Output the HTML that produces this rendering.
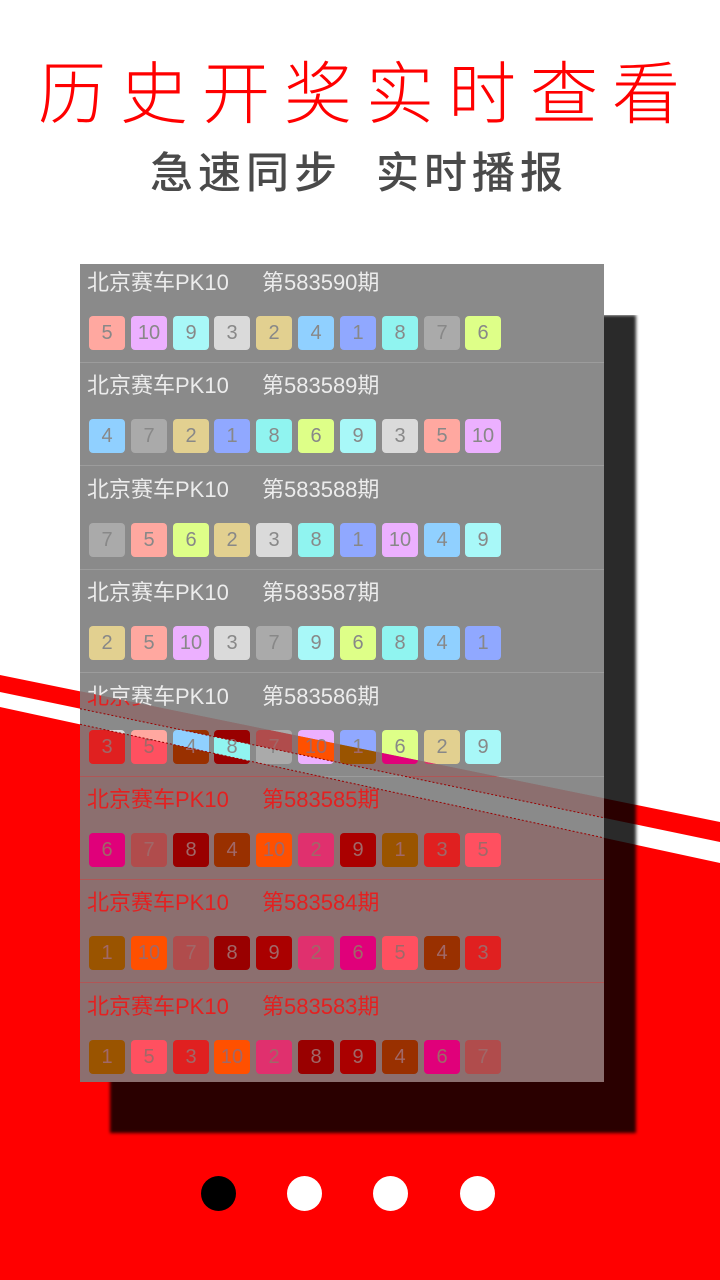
<!DOCTYPE html>
<html><head><meta charset="utf-8"><style>
*{margin:0;padding:0;box-sizing:border-box}
body{width:720px;height:1280px;position:relative;overflow:hidden;background:#fff;font-family:"Liberation Sans","Noto Sans CJK SC",sans-serif}
.abs{position:absolute}
.h1{left:38px;top:55px;font-size:68px;line-height:80px;color:#f00;letter-spacing:14px;white-space:nowrap;font-weight:300}
.h2{top:146px;font-size:43px;line-height:56px;color:#4a4a4a;letter-spacing:5px;white-space:nowrap;font-weight:500}
.shadow{left:110px;top:315px;width:526px;height:818px;background:rgba(0,0,0,.835);filter:blur(1.5px);clip-path:polygon(494px 0,530px 0,530px 830px,-10px 830px,-10px 767px,494px 767px)}
.panel{left:80px;top:264px;width:524px;height:818px;overflow:hidden}
.layer{position:absolute;left:0;top:0;width:524px;height:818px}
.norm{background:rgba(125,125,125,.9)}
.red{background:#8c6f6f;clip-path:polygon(0 427.3px,524px 534.3px,524px 553.8px,0 444.7px,0 460.3px,524px 573.9px,524px 818px,0 818px)}
.row{position:absolute;left:0;width:524px;height:103.4px}
.t{position:absolute;top:5px;font-size:22px;line-height:28px;color:#ececec;white-space:nowrap}
.red .t{color:#e42020}
.t1{left:7px}.t2{left:182px}
.div{position:absolute;left:0;right:0;top:98px;height:1px;background:#9c9c9c}
.red .div{background:#b05656}
.b{position:absolute;top:52px;width:36px;height:34px;border-radius:4px;font-size:20px;line-height:34px;text-align:center;color:#888}
.red .b{color:#a06868}
.n1{background:#90a8ff}.n2{background:#e2d090}.n3{background:#dadada}.n4{background:#90d0ff}.n5{background:#ffa8a0}
.n6{background:#deff88}.n7{background:#aaa}.n8{background:#90f4f0}.n9{background:#a8f8f8}.n10{background:#ecb0ff}
.red .n1{background:#9a5400}.red .n2{background:#e0306e}.red .n3{background:#e02020}.red .n4{background:#993000}.red .n5{background:#ff5060}
.red .n6{background:#e0007a}.red .n7{background:#b04c4c}.red .n8{background:#990000}.red .n9{background:#aa0000}.red .n10{background:#ff5000}
.b:nth-of-type(3){left:9px}.b:nth-of-type(4){left:51px}.b:nth-of-type(5){left:93px}.b:nth-of-type(6){left:134px}.b:nth-of-type(7){left:176px}
.b:nth-of-type(8){left:218px}.b:nth-of-type(9){left:260px}.b:nth-of-type(10){left:302px}.b:nth-of-type(11){left:344px}.b:nth-of-type(12){left:385px}
.dot{position:absolute;top:1176px;width:35px;height:35px;border-radius:50%;background:#fff}
</style></head><body>
<svg class="abs" style="left:0;top:0" width="720" height="1280">
<polygon points="0,675 720,822 720,842 0,692" fill="#f00"/>
<polygon points="0,707 720,863 720,1280 0,1280" fill="#f00"/>
</svg>
<div class="abs h1">历史开奖实时查看</div>
<div class="abs h2" style="left:150px">急速同步</div>
<div class="abs h2" style="left:376px">实时播报</div>
<div class="abs shadow"></div>
<div class="abs panel">
<div class="layer norm">
<div class="row" style="top:0"><span class="t t1">北京赛车PK10</span><span class="t t2">第583590期</span><span class="b n5">5</span><span class="b n10">10</span><span class="b n9">9</span><span class="b n3">3</span><span class="b n2">2</span><span class="b n4">4</span><span class="b n1">1</span><span class="b n8">8</span><span class="b n7">7</span><span class="b n6">6</span><div class="div"></div></div>
<div class="row" style="top:103.4px"><span class="t t1">北京赛车PK10</span><span class="t t2">第583589期</span><span class="b n4">4</span><span class="b n7">7</span><span class="b n2">2</span><span class="b n1">1</span><span class="b n8">8</span><span class="b n6">6</span><span class="b n9">9</span><span class="b n3">3</span><span class="b n5">5</span><span class="b n10">10</span><div class="div"></div></div>
<div class="row" style="top:206.8px"><span class="t t1">北京赛车PK10</span><span class="t t2">第583588期</span><span class="b n7">7</span><span class="b n5">5</span><span class="b n6">6</span><span class="b n2">2</span><span class="b n3">3</span><span class="b n8">8</span><span class="b n1">1</span><span class="b n10">10</span><span class="b n4">4</span><span class="b n9">9</span><div class="div"></div></div>
<div class="row" style="top:310.2px"><span class="t t1">北京赛车PK10</span><span class="t t2">第583587期</span><span class="b n2">2</span><span class="b n5">5</span><span class="b n10">10</span><span class="b n3">3</span><span class="b n7">7</span><span class="b n9">9</span><span class="b n6">6</span><span class="b n8">8</span><span class="b n4">4</span><span class="b n1">1</span><div class="div"></div></div>
<div class="row" style="top:413.6px"><span class="t t1">北京赛车PK10</span><span class="t t2">第583586期</span><span class="b n3">3</span><span class="b n5">5</span><span class="b n4">4</span><span class="b n8">8</span><span class="b n7">7</span><span class="b n10">10</span><span class="b n1">1</span><span class="b n6">6</span><span class="b n2">2</span><span class="b n9">9</span><div class="div"></div></div>
<div class="row" style="top:517px"><span class="t t1">北京赛车PK10</span><span class="t t2">第583585期</span><span class="b n6">6</span><span class="b n7">7</span><span class="b n8">8</span><span class="b n4">4</span><span class="b n10">10</span><span class="b n2">2</span><span class="b n9">9</span><span class="b n1">1</span><span class="b n3">3</span><span class="b n5">5</span><div class="div"></div></div>
</div>
<div class="layer red">
<div class="row" style="top:413.6px"><span class="t t1">北京赛车PK10</span><span class="t t2">第583586期</span><span class="b n3">3</span><span class="b n5">5</span><span class="b n4">4</span><span class="b n8">8</span><span class="b n7">7</span><span class="b n10">10</span><span class="b n1">1</span><span class="b n6">6</span><span class="b n2">2</span><span class="b n9">9</span><div class="div"></div></div>
<div class="row" style="top:517px"><span class="t t1">北京赛车PK10</span><span class="t t2">第583585期</span><span class="b n6">6</span><span class="b n7">7</span><span class="b n8">8</span><span class="b n4">4</span><span class="b n10">10</span><span class="b n2">2</span><span class="b n9">9</span><span class="b n1">1</span><span class="b n3">3</span><span class="b n5">5</span><div class="div"></div></div>
<div class="row" style="top:620.4px"><span class="t t1">北京赛车PK10</span><span class="t t2">第583584期</span><span class="b n1">1</span><span class="b n10">10</span><span class="b n7">7</span><span class="b n8">8</span><span class="b n9">9</span><span class="b n2">2</span><span class="b n6">6</span><span class="b n5">5</span><span class="b n4">4</span><span class="b n3">3</span><div class="div"></div></div>
<div class="row" style="top:723.8px"><span class="t t1">北京赛车PK10</span><span class="t t2">第583583期</span><span class="b n1">1</span><span class="b n5">5</span><span class="b n3">3</span><span class="b n10">10</span><span class="b n2">2</span><span class="b n8">8</span><span class="b n9">9</span><span class="b n4">4</span><span class="b n6">6</span><span class="b n7">7</span></div>
</div>
<svg class="layer" width="524" height="818">
<line x1="0" y1="444.7" x2="524" y2="553.8" stroke="#900" stroke-width="1" stroke-dasharray="2 2"/>
<line x1="0" y1="460.3" x2="524" y2="573.9" stroke="#900" stroke-width="1" stroke-dasharray="2 2"/>
</svg>
</div>
<div class="dot" style="left:201px;background:#000"></div>
<div class="dot" style="left:287px"></div>
<div class="dot" style="left:373px"></div>
<div class="dot" style="left:460px"></div>
</body></html>
